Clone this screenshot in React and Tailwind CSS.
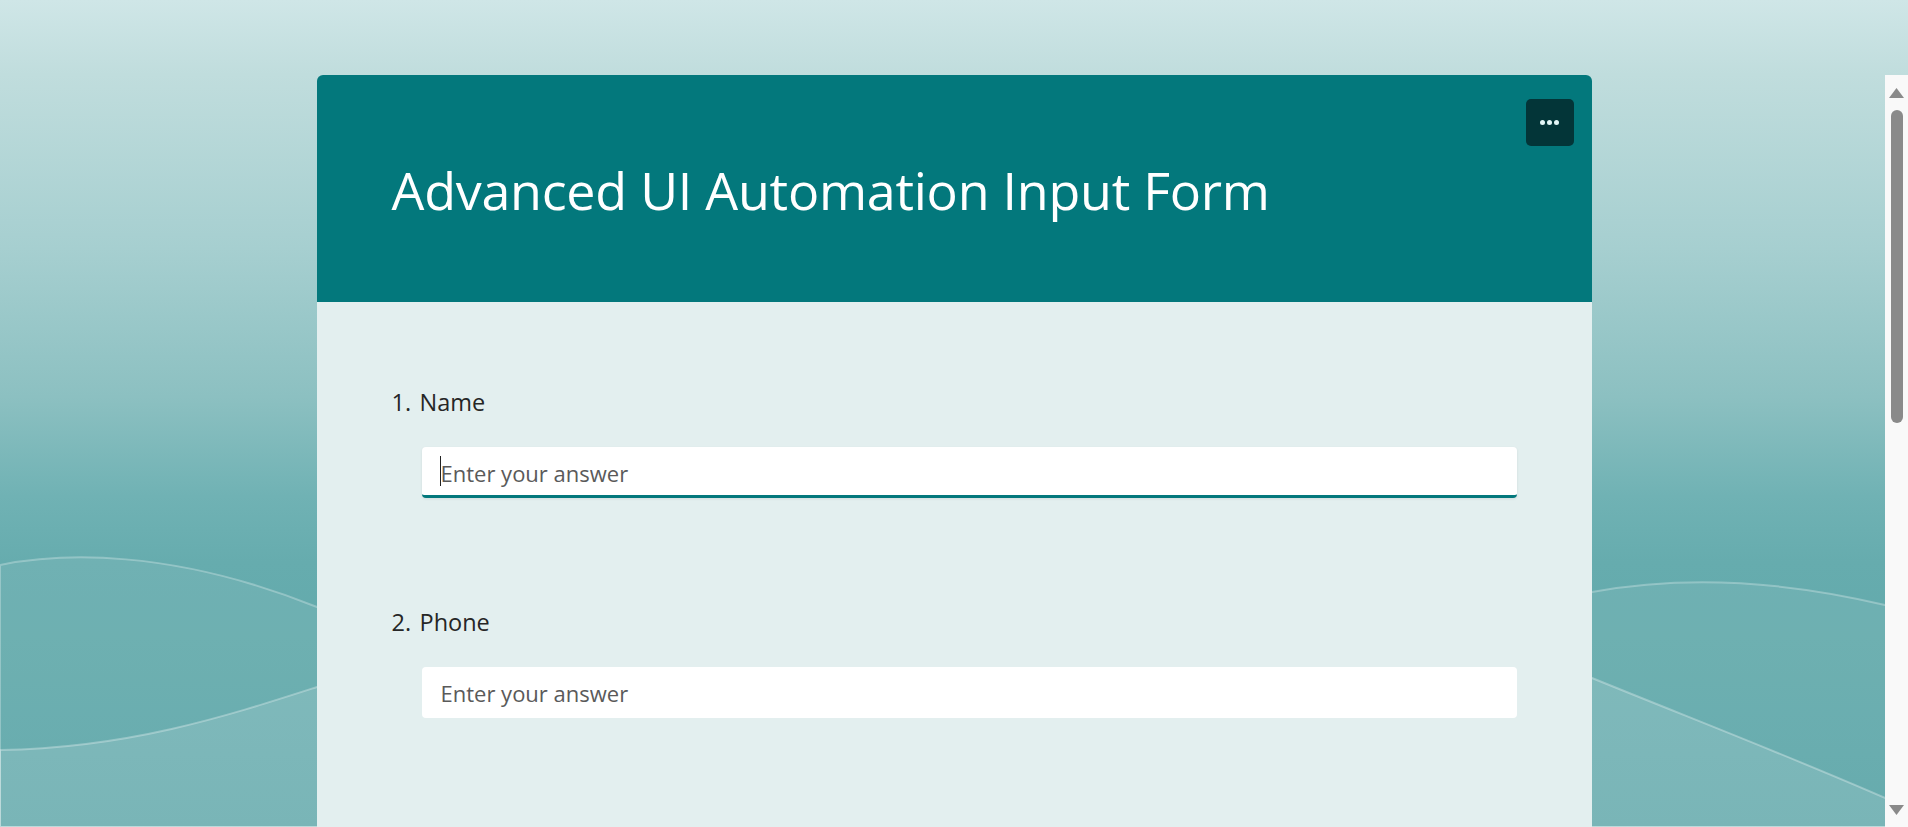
import React from 'react'

const questions = [
  { no: '1.', label: 'Name', focused: true },
  { no: '2.', label: 'Phone', focused: false },
]

function Waves() {
  return (
    <svg className="absolute inset-0 h-full w-full" viewBox="0 0 1908 827" preserveAspectRatio="none">
      {/* upper wave */}
      <path
        d="M0,565 C60,553 170,548 317,607 C700,760 1250,560 1592,592 C1680,576 1780,580 1885,605 L1908,612 L1908,827 L0,827 Z"
        fill="rgba(255,255,255,0.07)"
        stroke="rgba(255,255,255,0.28)"
        strokeWidth="2"
      />
      {/* lower wave */}
      <path
        d="M0,750 C130,748 230,715 317,687 C700,560 1200,530 1592,678 C1700,722 1800,760 1908,808 L1908,827 L0,827 Z"
        fill="rgba(255,255,255,0.13)"
        stroke="rgba(255,255,255,0.3)"
        strokeWidth="2"
      />
    </svg>
  )
}

function Scrollbar() {
  return (
    <div className="absolute right-0 top-[75px] bottom-0 w-[23px] bg-[#f9f9f9] flex flex-col items-center">
      <svg width="15" height="10" viewBox="0 0 15 10" className="mt-[13px]">
        <path d="M7.5,0 L15,10 L0,10 Z" fill="#8a8a8a" />
      </svg>
      <div className="mt-[12px] h-[313px] w-[12px] rounded-full bg-[#8a8a8a]" />
      <div className="flex-1" />
      <svg width="15" height="10" viewBox="0 0 15 10" className="mb-[12px]">
        <path d="M0,0 L15,0 L7.5,10 Z" fill="#8a8a8a" />
      </svg>
    </div>
  )
}

export default function App() {
  return (
    <div className="relative h-screen w-full overflow-hidden bg-[linear-gradient(180deg,#cfe6e7_0%,#c0dddd_9%,#a6cfd0_30%,#8cc0c1_48%,#70b2b4_60%,#66acae_68%,#5ba5a7_100%)] font-['Open_Sans','Noto_Sans',sans-serif]">
      <Waves />

      <div className="relative mx-auto mt-[75px] w-[1275px]">
        {/* header */}
        <div className="relative h-[227px] rounded-t-[6px] bg-[#03787c] pl-[75px] pt-[89px]">
          <h1 className="text-[52px] leading-[52px] font-normal text-white tracking-[-0.25px]">
            Advanced UI Automation Input Form
          </h1>
          <button className="absolute right-[18px] top-[24px] flex h-[47px] w-[48px] items-center justify-center gap-[2px] rounded-[5px] bg-[#033538]">
            <span className="h-[5px] w-[5px] rounded-full bg-[#e2f6f6]" />
            <span className="h-[5px] w-[5px] rounded-full bg-[#e2f6f6]" />
            <span className="h-[5px] w-[5px] rounded-full bg-[#e2f6f6]" />
          </button>
        </div>

        {/* body */}
        <div className="h-[700px] bg-[#e3efef] pl-[75px] pr-[75px] pt-[84px]">
          {questions.map((q, i) => (
            <div key={q.label} className={i > 0 ? 'mt-[108px]' : ''}>
              <div className="flex text-[23.5px] leading-[32px] text-[#262626]">
                <span className="w-[28px]">{q.no}</span>
                <span>{q.label}</span>
              </div>
              <div className="relative ml-[30px] mt-[29px]">
                <input
                  type="text"
                  placeholder="Enter your answer"
                  className={
                    q.focused
                      ? 'block h-[51px] w-full rounded-[4px] border-b-[3px] border-[#03787c] bg-white pl-[19px] pt-[3px] text-[22px] text-[#333] shadow-[0_1px_3px_rgba(0,0,0,0.08)] outline-none placeholder:text-[#5a5a5a]'
                      : 'block h-[51px] w-full rounded-[4px] bg-white pl-[19px] text-[22px] text-[#333] outline-none placeholder:text-[#5a5a5a]'
                  }
                />
                {q.focused && (
                  <span className="absolute left-[18px] top-[9px] h-[30px] w-px bg-[#222]" />
                )}
              </div>
            </div>
          ))}
        </div>
      </div>

      <Scrollbar />
    </div>
  )
}
